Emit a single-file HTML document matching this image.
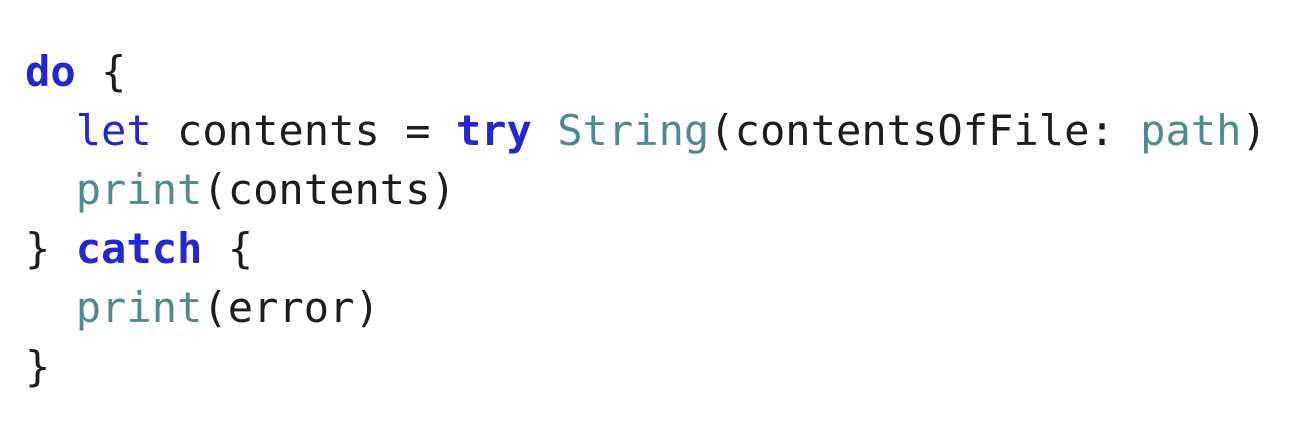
<!DOCTYPE html>
<html><head><meta charset="utf-8"><style>
html,body{margin:0;padding:0;background:#fff;width:1293px;height:435px;overflow:hidden}
pre{position:absolute;left:25px;top:42px;margin:0;font-family:"DejaVu Sans Mono","Liberation Mono",monospace;font-size:42.1px;line-height:59px;color:#1d1d1f}
.k{color:#2327cf;font-weight:bold}
.f{color:#4f8a8c}
</style></head><body>
<pre><span class="k">do</span> {
  <span style="color:#2327cf">let</span> contents = <span class="k">try</span> <span class="f">String</span>(contentsOfFile: <span class="f">path</span>)
  <span class="f">print</span>(contents)
} <span class="k">catch</span> {
  <span class="f">print</span>(error)
}</pre>
</body></html>
